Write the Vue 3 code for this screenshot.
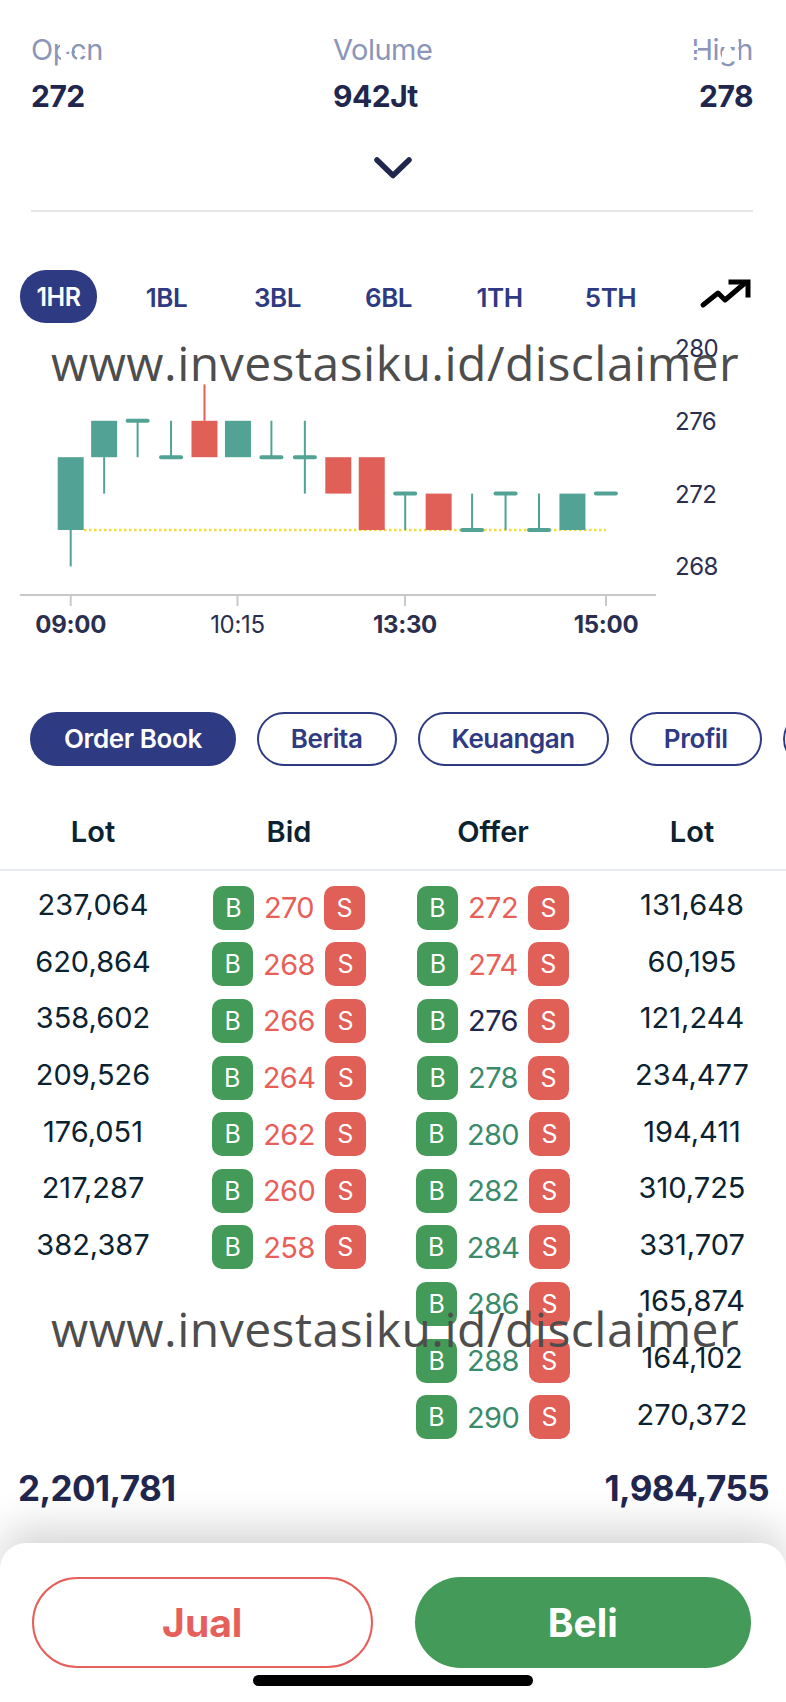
<template>
  <div class="screen">
    <div class="stats">
      <div v-for="s in stats" :key="s.label" class="stat" :class="s.align">
        <div class="stat-label">{{ s.label }}</div>
        <div class="stat-value">{{ s.value }}</div>
      </div>
    </div>
    <!-- white specks of the upper watermark that eat into Open and High -->
    <svg class="specks" width="786" height="80" viewBox="0 0 786 80">
      <path d="M60 44 L72 44 L72 51 L66 52 L60 50 Z M61 54 L72 54 L72 60 L61 60 Z M75 50 L88 49 L88 52 L75 54 Z M78 56 L84 62 L76 62 Z" fill="#fff" />
      <path d="M690 46 L698 46 L698 50 L690 50 Z M690 54 L698 54 L698 57 L690 57 Z M722 42 L739 42 L739 47 L722 47 Z M722 51 L739 50 L739 61 L722 62 Z M742 38 L748 38 L748 44 L742 44 Z" fill="#fff" />
    </svg>
    <div class="chevron">
      <svg width="38" height="22" viewBox="0 0 38 22">
        <path d="M3 3 L19 18.5 L35 3" fill="none" stroke="#20264d" stroke-width="5.5" stroke-linecap="round" stroke-linejoin="round" />
      </svg>
    </div>
    <div class="divider"></div>

    <div class="periods">
      <div v-for="(p, i) in periods" :key="p" class="period" :class="{ active: i === 0 }">{{ p }}</div>
      <svg class="trend" width="52" height="30" viewBox="0 0 52 30">
        <path d="M4 26 L19 14 L26 21 L46 4" fill="none" stroke="#000" stroke-width="5" stroke-linecap="round" stroke-linejoin="round" />
        <path d="M32 3 L49 3 L49 16" fill="none" stroke="#000" stroke-width="5" stroke-linecap="square" stroke-linejoin="miter" />
      </svg>
    </div>

    <svg class="chart" width="786" height="370" viewBox="0 0 786 370">
      <line x1="84" y1="199" x2="606" y2="199" stroke="#f5dc3c" stroke-width="2.5" stroke-dasharray="2.5 2.5" />
      <g v-for="(c, i) in candles" :key="i">
        <line v-if="c.wick" :x1="cx(i)" :x2="cx(i)" :y1="py(c.wick[0])" :y2="py(c.wick[1])" :stroke="colors[c.color]" stroke-width="2" />
        <rect v-if="c.body" :x="cx(i) - 13" :y="py(c.body[0])" width="26" :height="py(c.body[1]) - py(c.body[0])" :fill="colors[c.color]" />
        <rect v-if="c.bar" :x="cx(i) - 12" :y="py(c.bar) - 2" width="24" height="4" rx="2" :fill="colors[c.color]" />
      </g>
      <line x1="20" y1="264" x2="656" y2="264" stroke="#c9c9c9" stroke-width="2" />
      <line v-for="t in ticks" :key="t.label" :x1="t.x" :x2="t.x" y1="264" y2="275" stroke="#c9c9c9" stroke-width="2" />
      <text v-for="t in ticks" :key="t.label + 't'" :x="t.x" y="302" text-anchor="middle" class="tick" :class="{ bold: t.bold }">{{ t.label }}</text>
      <text v-for="y in yLabels" :key="y" x="675" :y="py(y) + 9" class="ylabel">{{ y }}</text>
    </svg>

    <div class="tabs">
      <div v-for="(t, i) in tabs" :key="t" class="tab" :class="{ active: i === 0 }">{{ t }}</div>
      <div class="tab cut"></div>
    </div>

    <div class="book-head">
      <div class="cell">Lot</div>
      <div class="cell">Bid</div>
      <div class="cell">Offer</div>
      <div class="cell">Lot</div>
    </div>

    <div class="book">
      <div v-for="(r, i) in rows" :key="i" class="row">
        <div class="cell lot">{{ r.bidLot }}</div>
        <div class="cell price-cell">
          <template v-if="r.bid">
            <span class="badge buy">B</span>
            <span class="price" :class="r.bidTone">{{ r.bid }}</span>
            <span class="badge sell">S</span>
          </template>
        </div>
        <div class="cell price-cell">
          <span class="badge buy">B</span>
          <span class="price" :class="r.offerTone">{{ r.offer }}</span>
          <span class="badge sell">S</span>
        </div>
        <div class="cell lot">{{ r.offerLot }}</div>
      </div>
    </div>

    <div class="totals">
      <span>2,201,781</span>
      <span>1,984,755</span>
    </div>

    <div class="sheet">
      <div class="actions">
        <div class="btn sell-btn">Jual</div>
        <div class="btn buy-btn">Beli</div>
      </div>
      <div class="home"></div>
    </div>

    <div class="watermark first">www.investasiku.id/disclaimer</div>
    <div class="watermark second">www.investasiku.id/disclaimer</div>
  </div>
</template>

<script setup>
const stats = [
  { label: 'Open', value: '272', align: 'left' },
  { label: 'Volume', value: '942Jt', align: 'left' },
  { label: 'High', value: '278', align: 'right' },
]
const periods = ['1HR', '1BL', '3BL', '6BL', '1TH', '5TH']
const tabs = ['Order Book', 'Berita', 'Keuangan', 'Profil']
const colors = { up: '#52a295', down: '#e05f57' }

const candles = [
  { color: 'up', body: [274, 270], wick: [270, 268] },
  { color: 'up', body: [276, 274], wick: [274, 272] },
  { color: 'up', bar: 276, wick: [276, 274] },
  { color: 'up', bar: 274, wick: [276, 274] },
  { color: 'down', body: [276, 274], wick: [278, 276] },
  { color: 'up', body: [276, 274] },
  { color: 'up', bar: 274, wick: [276, 274] },
  { color: 'up', bar: 274, wick: [276, 272] },
  { color: 'down', body: [274, 272] },
  { color: 'down', body: [274, 270] },
  { color: 'up', bar: 272, wick: [272, 270] },
  { color: 'down', body: [272, 270] },
  { color: 'up', bar: 270, wick: [272, 270] },
  { color: 'up', bar: 272, wick: [272, 270] },
  { color: 'up', bar: 270, wick: [272, 270] },
  { color: 'up', body: [272, 270] },
  { color: 'up', bar: 272 },
]
const cx = (i) => 70.7 + i * 33.45
const py = (v) => 199 + (270 - v) * 18.2

const ticks = [
  { label: '09:00', x: 70.7, bold: true },
  { label: '10:15', x: 237.5, bold: false },
  { label: '13:30', x: 405, bold: true },
  { label: '15:00', x: 606, bold: true },
]
const yLabels = [280, 276, 272, 268]

const bids = [
  ['237,064', 270], ['620,864', 268], ['358,602', 266], ['209,526', 264],
  ['176,051', 262], ['217,287', 260], ['382,387', 258],
]
const offers = [
  ['131,648', 272, 'red'], ['60,195', 274, 'red'], ['121,244', 276, 'dark'], ['234,477', 278, 'green'],
  ['194,411', 280, 'green'], ['310,725', 282, 'green'], ['331,707', 284, 'green'], ['165,874', 286, 'green'],
  ['164,102', 288, 'green'], ['270,372', 290, 'green'],
]
const rows = offers.map((o, i) => ({
  bidLot: bids[i] ? bids[i][0] : '',
  bid: bids[i] ? bids[i][1] : null,
  bidTone: 'red',
  offer: o[1],
  offerTone: o[2],
  offerLot: o[0],
}))
</script>

<style>
body {
  margin: 0;
  background: #fff;
}
</style>

<style scoped>
.screen {
  position: relative;
  width: 786px;
  height: 1702px;
  overflow: hidden;
  background: #fff;
  font-family: Inter, "Noto Sans", sans-serif;
  color: #20264d;
}

.stats {
  display: grid;
  grid-template-columns: 302px 1fr auto;
  padding: 33px 33px 0 31px;
}

.stat-label {
  font-size: 29px;
  line-height: 34px;
  color: #8b95b8;
  letter-spacing: -0.5px;
}

.stat-value {
  margin-top: 12px;
  font-size: 30px;
  line-height: 34px;
  font-weight: 700;
  letter-spacing: -0.5px;
}

.stat.right {
  text-align: right;
}

.specks {
  position: absolute;
  left: 0;
  top: 0;
}

.chevron {
  display: flex;
  justify-content: center;
  padding-top: 44px;
  height: 22px;
}

.divider {
  height: 2px;
  margin: 31px 33px 0 31px;
  background: #e4e6ea;
}

.periods {
  position: relative;
  display: flex;
  align-items: center;
  height: 53px;
  margin-top: 58px;
  padding-left: 20px;
}

.period {
  width: 77px;
  height: 53px;
  margin-right: 42.5px;
  line-height: 55px;
  border-radius: 26px;
  text-align: center;
  font-size: 26px;
  font-weight: 600;
  letter-spacing: -0.5px;
  color: #2e3a82;
}

.period:nth-child(n+2) {
  width: 54px;
  margin-right: 57px;
}

.period.active {
  background: #2e3a82;
  color: #fff;
  font-size: 25px;
}

.trend {
  position: absolute;
  left: 699px;
  top: 9px;
}

.chart {
  display: block;
  margin-top: 8px;
}

.tick {
  font-size: 24px;
  fill: #2b2f4f;
  font-family: Inter, sans-serif;
  letter-spacing: -0.3px;
}

.tick.bold {
  font-weight: 700;
}

.ylabel {
  font-size: 24px;
  fill: #2b2f4f;
  font-family: Inter, sans-serif;
  letter-spacing: -0.5px;
}

.tabs {
  display: flex;
  gap: 21px;
  margin-top: 11px;
  padding-left: 30px;
}

.tab {
  flex: none;
  box-sizing: border-box;
  height: 54px;
  line-height: 50px;
  padding: 0 32px;
  border: 2px solid #2e3a82;
  border-radius: 27px;
  font-size: 26px;
  font-weight: 600;
  letter-spacing: -0.4px;
  color: #2e3a82;
  background: #fff;
}

.tab.active {
  background: #2e3a82;
  color: #fff;
}

.tab.cut {
  width: 60px;
}

.book-head,
.row {
  display: grid;
  grid-template-columns: 186px 206px 202px 196px;
}

.cell {
  text-align: center;
}

.book-head {
  height: 83px;
  line-height: 91px;
  margin-top: 20px;
  border-bottom: 2px solid #e8eaf2;
  font-size: 29px;
  font-weight: 600;
  color: #0b2230;
}

.book {
  padding-top: 9.5px;
}

.row {
  height: 56.6px;
  align-items: center;
}

.lot {
  font-size: 29px;
  color: #0b2230;
  margin-top: -8px;
}

.price-cell {
  display: flex;
  justify-content: center;
  align-items: center;
  gap: 10px;
  margin-top: -2px;
}

.badge {
  width: 41px;
  height: 44px;
  line-height: 44px;
  border-radius: 10px;
  color: #fff;
  font-size: 25px;
  text-align: center;
}

.badge.buy {
  background: #449a58;
}

.badge.sell {
  background: #e05f57;
}

.price {
  font-size: 29px;
  letter-spacing: -0.6px;
}

.price.red {
  color: #e85e58;
}

.price.green {
  color: #3a8a6c;
}

.price.dark {
  color: #20264d;
}

.totals {
  display: flex;
  justify-content: space-between;
  margin-top: 22px;
  padding: 0 17px 0 18px;
  font-size: 35px;
  line-height: 40px;
  font-weight: 700;
  letter-spacing: -0.6px;
  color: #20264d;
}

.sheet {
  position: absolute;
  left: 0;
  right: 0;
  bottom: 0;
  height: 159px;
  border-radius: 26px 26px 0 0;
  background: #fff;
  box-shadow: 0 -16px 40px rgba(0, 0, 0, 0.16);
}

.actions {
  display: flex;
  gap: 42px;
  padding: 34px 35px 0 32px;
}

.btn {
  flex: 1;
  box-sizing: border-box;
  height: 91px;
  line-height: 91px;
  border-radius: 46px;
  text-align: center;
  font-size: 39px;
  font-weight: 700;
}

.sell-btn {
  line-height: 87px;
  border: 2px solid #e5605a;
  color: #e5605a;
}

.buy-btn {
  background: #449a58;
  color: #fff;
}

.home {
  width: 280px;
  height: 11px;
  margin: 7px auto 0;
  border-radius: 6px;
  background: #000;
}

.watermark {
  position: absolute;
  left: 51px;
  font-family: "Open Sans", sans-serif;
  font-size: 48px;
  letter-spacing: 0.49px;
  line-height: 60px;
  color: #4d4d4d;
  white-space: nowrap;
}

.watermark.first {
  top: 333px;
}

.watermark.second {
  top: 1299px;
}
</style>
